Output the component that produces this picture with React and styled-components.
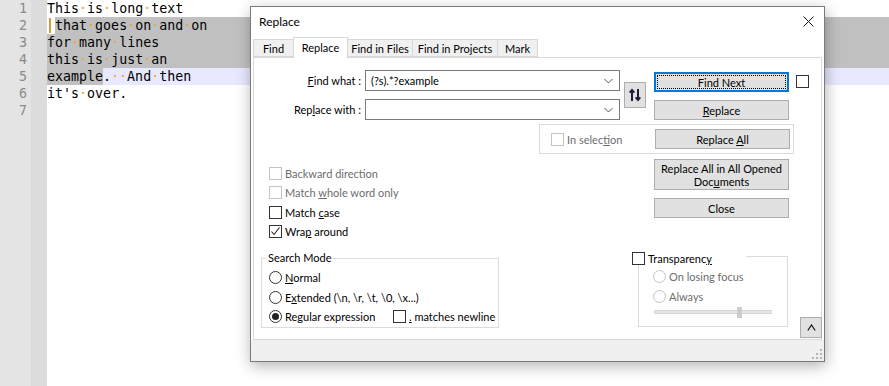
import React from 'react';
import styled, { createGlobalStyle } from 'styled-components';

const GlobalStyle = createGlobalStyle`
  html, body { margin: 0; padding: 0; width: 889px; height: 386px; overflow: hidden; background: #fff; }
  #root { width: 889px; height: 386px; }
  * { box-sizing: border-box; }
`;

/* ---------- editor ---------- */
const Screen = styled.div`
  position: relative;
  width: 889px;
  height: 386px;
  display: flex;
  overflow: hidden;
  background: #fff;
`;
const LineNumbers = styled.div`
  width: 31px;
  flex-shrink: 0;
  background: #e4e4e4;
  padding-right: 4px;
  text-align: right;
  font-family: "DejaVu Sans Mono", monospace;
  font-size: 13.3px;
  color: #8a8a8a;
`;
const LineNo = styled.div`
  height: 17px;
  line-height: 17px;
`;
const FoldMargin = styled.div`
  width: 16px;
  flex-shrink: 0;
  background: #dcdcdc;
`;
const TextArea = styled.div`
  flex: 1;
  font-family: "DejaVu Sans Mono", monospace;
  font-size: 13.3px;
  color: #000;
  white-space: pre;
`;
const Line = styled.div`
  height: 17px;
  line-height: 17px;
  display: flex;
  background: ${p => p.$bg || 'transparent'};
`;
const Sel = styled.span`
  background: #c0c0c0;
`;
const Ws = styled.span`
  color: #f0a035;
`;
const CaretCell = styled.span`
  display: inline-block;
  width: 8px;
  height: 17px;
  background: linear-gradient(to right, #fff 2px, #d99a3c 2px, #d99a3c 4px, #fff 4px);
  background-size: 100% 15px;
  background-position: 0 1px;
  background-repeat: no-repeat;
  background-color: #fff;
`;

const renderText = (s) =>
  s.split('').map((c, i) => (c === ' ' ? <Ws key={i}>·</Ws> : <React.Fragment key={i}>{c}</React.Fragment>));

/* ---------- dialog shell ---------- */
const Dialog = styled.div`
  position: absolute;
  left: 250px;
  top: 6px;
  width: 575px;
  height: 356px;
  border: 1px solid #7a7a7a;
  background: #fff;
  box-shadow: 1px 4px 14px rgba(0, 0, 0, 0.3);
  display: flex;
  flex-direction: column;
  font-family: Lato, "Noto Sans", sans-serif;
  font-size: 11px;
  color: #000;
`;
const TitleBar = styled.div`
  height: 30px;
  flex-shrink: 0;
  display: flex;
  align-items: center;
  justify-content: space-between;
  padding: 0 10px 1px 8px;
  font-size: 12px;
`;
const TabStrip = styled.div`
  height: 20px;
  flex-shrink: 0;
  display: flex;
  align-items: flex-end;
  padding-left: 2px;
`;
const Tab = styled.div`
  width: ${p => p.$w}px;
  height: ${p => (p.$active ? 21 : 18)}px;
  margin-left: ${p => (p.$first ? 0 : -1)}px;
  margin-bottom: ${p => (p.$active ? -1 : 0)}px;
  border: 1px solid #d9d9d9;
  border-bottom: ${p => (p.$active ? 'none' : '1px solid #d9d9d9')};
  background: ${p => (p.$active ? '#fff' : '#f0f0f0')};
  display: flex;
  align-items: center;
  justify-content: center;
  padding-bottom: ${p => (p.$active ? 2 : 0)}px;
  position: relative;
  z-index: ${p => (p.$active ? 1 : 0)};
`;
const Panel = styled.div`
  height: 283px;
  flex-shrink: 0;
  margin: 0 2px;
  border: 1px solid #d9d9d9;
  background: #fff;
  display: flex;
  flex-direction: column;
`;
const Footer = styled.div`
  flex: 1;
  background: #f0f0f0;
  display: flex;
  justify-content: flex-end;
  align-items: flex-end;
  padding: 0 2px 2px 0;
`;

/* ---------- controls ---------- */
const Mn = styled.span`
  text-decoration: underline;
  text-underline-offset: 1px;
`;
const Section = styled.div`
  display: flex;
  align-items: flex-start;
  margin-top: ${p => p.$mt || 0}px;
`;
const FormGrid = styled.div`
  display: grid;
  grid-template-columns: 107px 255px;
  grid-auto-rows: 21px;
  column-gap: 4px;
  row-gap: 8px;
`;
const FieldLabel = styled.div`
  align-self: center;
  text-align: right;
  white-space: nowrap;
`;
const Combo = styled.div`
  border: 1px solid #7a7a7a;
  background: #fff;
  display: flex;
  align-items: center;
  padding: 0 6px 0 5px;
  justify-content: space-between;
  white-space: pre;
`;
const SwapButton = styled.div`
  width: 22px;
  height: 26px;
  margin-left: 4px;
  align-self: center;
  background: #e1e1e1;
  border: 1px solid #adadad;
  display: flex;
  align-items: center;
  justify-content: center;
`;
const ButtonColumn = styled.div`
  width: 135px;
  margin-left: ${p => p.$ml || 0}px;
  margin-top: ${p => p.$mt || 0}px;
  display: flex;
  flex-direction: column;
  gap: 8px;
`;
const Button = styled.div`
  width: ${p => p.$w || 135}px;
  height: ${p => p.$h || 20}px;
  background: #e1e1e1;
  border: ${p => (p.$focus ? '2px solid #0078d7' : '1px solid #adadad')};
  outline: ${p => (p.$focus ? '1px dotted #000' : 'none')};
  outline-offset: -4px;
  display: flex;
  align-items: center;
  justify-content: center;
  text-align: center;
  line-height: 13px;
  flex-shrink: 0;
`;
const Box = styled.span`
  width: 13px;
  height: 13px;
  flex-shrink: 0;
  border: 1px solid ${p => (p.$disabled ? '#c4c4c4' : '#333')};
  background: #fff;
  display: inline-flex;
  align-items: center;
  justify-content: center;
  margin-left: ${p => p.$ml || 0}px;
  margin-top: ${p => p.$mt || 0}px;
`;
const Round = styled.span`
  width: 13px;
  height: 13px;
  flex-shrink: 0;
  border-radius: 50%;
  border: 1px solid ${p => (p.$disabled ? '#c4c4c4' : '#333')};
  background: #fff;
  display: inline-flex;
  align-items: center;
  justify-content: center;
`;
const Dot = styled.span`
  width: 7px;
  height: 7px;
  border-radius: 50%;
  background: #222;
`;
const CheckRow = styled.div`
  display: flex;
  align-items: center;
  height: ${p => p.$h || 19.5}px;
  gap: 3px;
  white-space: nowrap;
  color: ${p => (p.$disabled ? '#6d6d6d' : '#000')};
`;
const Caption = styled.span`
  min-width: ${p => p.$w || 0}px;
`;
const ChecksColumn = styled.div`
  width: 385px;
  margin-left: 15px;
  padding-top: 9.5px;
  display: flex;
  flex-direction: column;
`;
const SelectionGroup = styled.div`
  margin-left: 285px;
  width: 255px;
  height: 30px;
  border: 1px solid #dcdcdc;
  display: flex;
  align-items: center;
  padding: 0 3px 0 11px;
  justify-content: space-between;
`;
const GroupBox = styled.div`
  width: ${p => p.$w}px;
  height: ${p => p.$h}px;
  margin-left: ${p => p.$ml}px;
  margin-top: ${p => p.$mt}px;
  border: 1px solid #dcdcdc;
  padding-left: ${p => p.$pl}px;
  display: flex;
  flex-direction: column;
  flex-shrink: 0;
`;
const Legend = styled.div`
  height: ${p => p.$h || 14}px;
  line-height: ${p => p.$h || 14}px;
  width: ${p => (p.$w ? `${p.$w}px` : 'fit-content')};
  margin: ${p => p.$mt}px 0 0 ${p => p.$ml}px;
  padding: 0 ${p => p.$px ?? 2}px;
  background: #fff;
  display: flex;
  align-items: center;
  gap: 3px;
  white-space: nowrap;
`;
const Spacer = styled.div`
  height: ${p => p.$h}px;
  flex-shrink: 0;
`;
const SliderRow = styled.div`
  height: 11px;
  margin-left: 1px;
  width: 118px;
  display: flex;
  align-items: center;
`;
const Track = styled.div`
  flex: 1;
  height: 4px;
  background: #e7e7e7;
  border: 1px solid #d6d6d6;
  display: flex;
  align-items: center;
  padding-left: 82px;
`;
const Thumb = styled.div`
  width: 5px;
  height: 11px;
  background: #cccccc;
  flex-shrink: 0;
`;
const SmallButton = styled.div`
  width: 22px;
  height: 21px;
  margin-left: 12px;
  margin-top: 66px;
  background: #e1e1e1;
  border: 1px solid #adadad;
  display: flex;
  align-items: center;
  justify-content: center;
  flex-shrink: 0;
`;

const Chevron = () => (
  <svg width="9" height="6" viewBox="0 0 9 6">
    <polyline points="0.5,1 4.5,5 8.5,1" fill="none" stroke="#555" strokeWidth="1" />
  </svg>
);
const CheckMark = () => (
  <svg width="11" height="11" viewBox="0 0 11 11">
    <polyline points="1.5,5.5 4,8.5 9.5,1.5" fill="none" stroke="#222" strokeWidth="1.1" />
  </svg>
);
const CloseX = () => (
  <svg width="11" height="11" viewBox="0 0 11 11">
    <path d="M0.5 0.5 L10.5 10.5 M10.5 0.5 L0.5 10.5" stroke="#111" strokeWidth="1" />
  </svg>
);
const SwapIcon = () => (
  <svg width="12" height="14" viewBox="0 0 12 14">
    <g fill="none" stroke="#1d1d3a" strokeWidth="2">
      <path d="M3 13 V2" />
      <path d="M0.6 4.6 L3 1.8 L5.4 4.6" strokeWidth="1.8" />
      <path d="M9 1 V12" />
      <path d="M6.6 9.4 L9 12.2 L11.4 9.4" strokeWidth="1.8" />
    </g>
  </svg>
);
const UpChevron = () => (
  <svg width="9" height="7" viewBox="0 0 9 7">
    <polyline points="0.8,6.5 4.5,1 8.2,6.5" fill="none" stroke="#111" strokeWidth="1.2" />
  </svg>
);
const Grip = () => (
  <svg width="10" height="10" viewBox="0 0 10 10">
    <g fill="#b4b4b4">
      <rect x="8" y="0" width="2" height="2" />
      <rect x="4" y="4" width="2" height="2" />
      <rect x="8" y="4" width="2" height="2" />
      <rect x="0" y="8" width="2" height="2" />
      <rect x="4" y="8" width="2" height="2" />
      <rect x="8" y="8" width="2" height="2" />
    </g>
  </svg>
);

const Check = ({ checked, disabled, children, h }) => (
  <CheckRow $disabled={disabled} $h={h}>
    <Box $disabled={disabled}>{checked && <CheckMark />}</Box>
    <span>{children}</span>
  </CheckRow>
);
const Radio = ({ selected, disabled, children, h = 19.5, w, after }) => (
  <CheckRow $disabled={disabled} $h={h}>
    <Round $disabled={disabled}>{selected && <Dot />}</Round>
    <Caption $w={w}>{children}</Caption>
    {after}
  </CheckRow>
);

const tabs = [
  { label: 'Find', w: 41 },
  { label: 'Replace', w: 55, active: true },
  { label: 'Find in Files', w: 66 },
  { label: 'Find in Projects', w: 86 },
  { label: 'Mark', w: 41 },
];

export default function App() {
  return (
    <>
      <GlobalStyle />
      <Screen>
        <LineNumbers>
          {[1, 2, 3, 4, 5, 6, 7].map(n => (
            <LineNo key={n}>{n}</LineNo>
          ))}
        </LineNumbers>
        <FoldMargin />
        <TextArea>
          <Line>{renderText('This is long text')}</Line>
          <Line $bg="#c0c0c0">
            <CaretCell />
            {renderText('that goes on and on')}
          </Line>
          <Line $bg="#c0c0c0">{renderText('for many lines')}</Line>
          <Line $bg="#c0c0c0">{renderText('this is just an')}</Line>
          <Line $bg="#e8e8ff">
            <Sel>example</Sel>
            {renderText('.  And then')}
          </Line>
          <Line>{renderText("it's over.")}</Line>
          <Line />
        </TextArea>

        <Dialog>
          <TitleBar>
            <span>Replace</span>
            <CloseX />
          </TitleBar>
          <TabStrip>
            {tabs.map((t, i) => (
              <Tab key={t.label} $w={t.w} $active={t.active} $first={i === 0}>
                {t.label}
              </Tab>
            ))}
          </TabStrip>
          <Panel>
            <Section $mt={12}>
              <FormGrid>
                <FieldLabel>
                  <Mn>F</Mn>ind what :
                </FieldLabel>
                <Combo>
                  <span>(?s).*?example</span>
                  <Chevron />
                </Combo>
                <FieldLabel>
                  Rep<Mn>l</Mn>ace with :
                </FieldLabel>
                <Combo>
                  <span />
                  <Chevron />
                </Combo>
              </FormGrid>
              <SwapButton>
                <SwapIcon />
              </SwapButton>
              <ButtonColumn $ml={8} $mt={2}>
                <Button $focus>Find Next</Button>
                <Button>
                  <span>
                    <Mn>R</Mn>eplace
                  </span>
                </Button>
              </ButtonColumn>
              <Box $ml={7} $mt={5} />
            </Section>

            <Section $mt={4}>
              <SelectionGroup>
                <Check disabled h={14}>
                  In selec<Mn>t</Mn>ion
                </Check>
                <Button>
                  <span>
                    Replace <Mn>A</Mn>ll
                  </span>
                </Button>
              </SelectionGroup>
            </Section>

            <Section>
              <ChecksColumn>
                <Check disabled>Backward direction</Check>
                <Check disabled>
                  Match <Mn>w</Mn>hole word only
                </Check>
                <Check>
                  Match <Mn>c</Mn>ase
                </Check>
                <Check checked>
                  Wra<Mn>p</Mn> around
                </Check>
              </ChecksColumn>
              <ButtonColumn $mt={5}>
                <Button $h={31}>
                  <span>
                    Replace All in All Opened
                    <br />
                    Doc<Mn>u</Mn>ments
                  </span>
                </Button>
                <Button>Close</Button>
              </ButtonColumn>
            </Section>

            <Section $mt={9.5}>
              <GroupBox $w={238} $h={70} $ml={7} $mt={7} $pl={7}>
                <Legend $mt={-8} $ml={-3}>Search Mode</Legend>
                <Spacer $h={2.75} />
                <Radio>
                  <Mn>N</Mn>ormal
                </Radio>
                <Radio>
                  E<Mn>x</Mn>tended {'(\\n, \\r, \\t, \\0, \\x...)'}
                </Radio>
                <Radio
                  selected
                  w={105}
                  after={
                    <>
                      <Box />
                      <span>
                        <Mn>.</Mn> matches newline
                      </span>
                    </>
                  }
                >
                  Re<Mn>g</Mn>ular expression
                </Radio>
              </GroupBox>

              <GroupBox $w={150} $h={71} $ml={139} $mt={5} $pl={14}>
                <Legend $mt={-5} $ml={-21} $w={114} $h={13} $px={0}>
                  <Box />
                  <span>
                    Transparenc<Mn>y</Mn>
                  </span>
                </Legend>
                <Spacer $h={1.5} />
                <Radio disabled h={20}>On losing focus</Radio>
                <Radio disabled h={20}>Always</Radio>
                <SliderRow>
                  <Track>
                    <Thumb />
                  </Track>
                </SliderRow>
              </GroupBox>

              <SmallButton>
                <UpChevron />
              </SmallButton>
            </Section>
          </Panel>
          <Footer>
            <Grip />
          </Footer>
        </Dialog>
      </Screen>
    </>
  );
}
